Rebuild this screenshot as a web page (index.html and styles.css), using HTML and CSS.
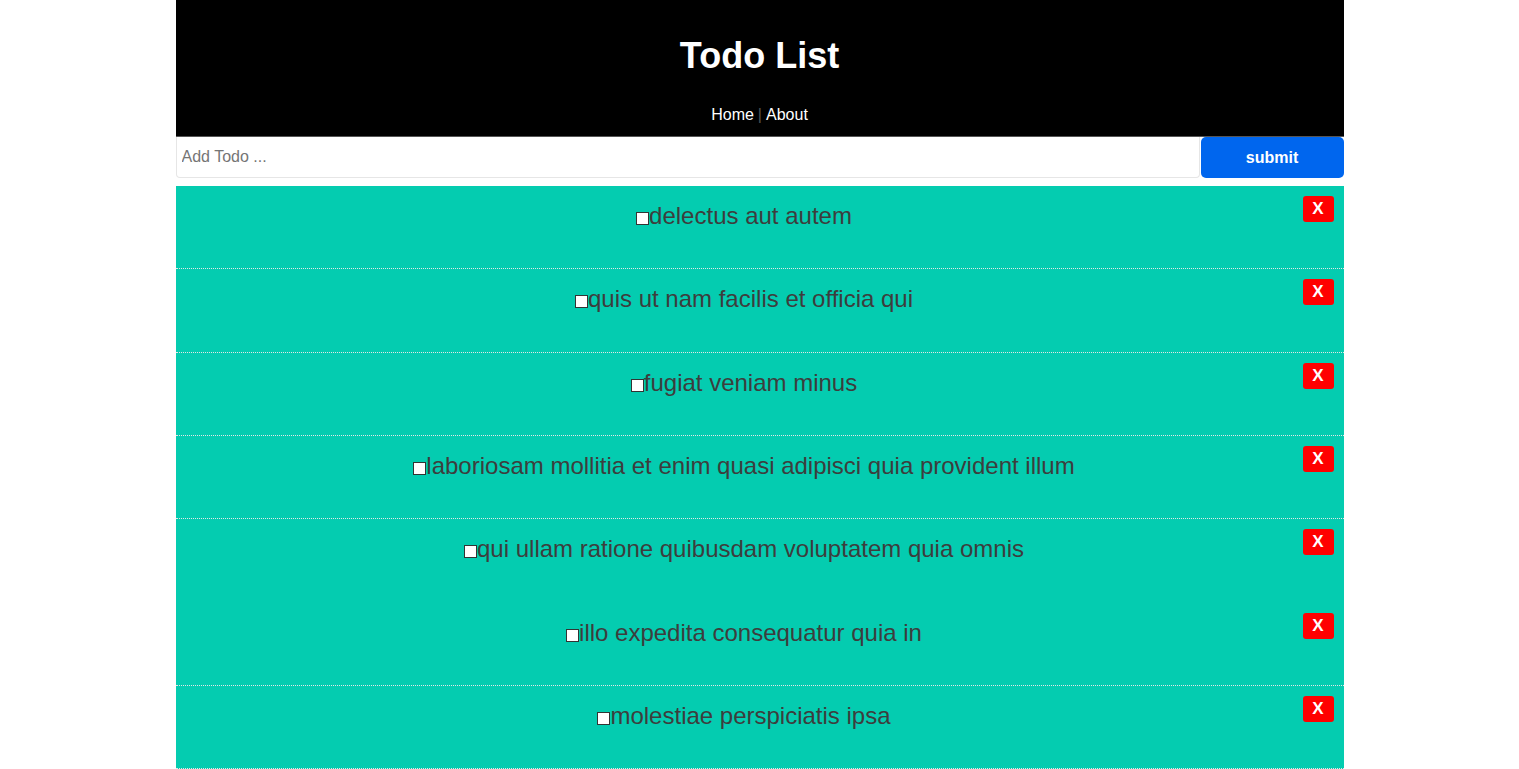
FILE: index.html
```html
<!DOCTYPE html>
<html>
<head>
<meta charset="utf-8">
<title>Todo List</title>
<link rel="stylesheet" href="styles.css">
</head>
<body>
<div class="app">
  <header class="header">
    <h1 class="title">Todo List</h1>
    <nav class="nav"><a class="nav-link" href="#">Home</a><span class="sep">|</span><a class="nav-link" href="#">About</a></nav>
  </header>
  <form class="add-form">
    <input class="add-input" type="text" placeholder="Add Todo ...">
    <button class="add-btn" type="button">submit</button>
  </form>
  <div class="list">
    <div class="item"><button class="del">X</button><input class="chk" type="checkbox">delectus aut autem</div>
    <div class="item"><button class="del">X</button><input class="chk" type="checkbox">quis ut nam facilis et officia qui</div>
    <div class="item"><button class="del">X</button><input class="chk" type="checkbox">fugiat veniam minus</div>
    <div class="item"><button class="del">X</button><input class="chk" type="checkbox">laboriosam mollitia et enim quasi adipisci quia provident illum</div>
    <div class="item no-line"><button class="del">X</button><input class="chk" type="checkbox">qui ullam ratione quibusdam voluptatem quia omnis</div>
    <div class="item"><button class="del">X</button><input class="chk" type="checkbox">illo expedita consequatur quia in</div>
    <div class="item"><button class="del">X</button><input class="chk" type="checkbox">molestiae perspiciatis ipsa</div>
  </div>
</div>
</body>
</html>
```

FILE: styles.css
```css
html, body {
  margin: 0;
  padding: 0;
  background: #fff;
  font-family: "Liberation Sans", Arial, sans-serif;
}

.app {
  width: 1168px;
  margin: 0 auto;
}

.header {
  background: #000;
  color: #fff;
  text-align: center;
  height: 137px;
  box-sizing: border-box;
  padding-top: 35px;
  border-bottom: 1px solid #555;
}

.title {
  margin: 0;
  font-size: 36px;
  line-height: 42px;
  font-weight: bold;
}

.nav {
  margin-top: 29px;
  font-size: 16px;
  line-height: 18px;
}

.nav-link {
  color: #fff;
  text-decoration: none;
}

.sep {
  color: #555;
  margin: 0 4px;
}

.add-form {
  display: flex;
  gap: 1px;
  height: 41px;
  margin-bottom: 8px;
}

.add-input {
  flex: 1;
  margin: 0;
  box-sizing: border-box;
  height: 41px;
  border: 1px solid #e6e6e6;
  border-top: none;
  border-radius: 0 0 4px 4px;
  padding: 0 5px;
  font-family: "Liberation Sans", Arial, sans-serif;
  font-size: 16px;
  color: #333;
  outline: none;
}

.add-input::placeholder {
  color: #757575;
}

.add-btn {
  width: 143px;
  height: 41px;
  margin: 0;
  border: none;
  border-radius: 5px;
  background: #0066ee;
  color: #fff;
  font-family: "Liberation Sans", Arial, sans-serif;
  font-size: 16px;
  font-weight: bold;
  cursor: pointer;
}

.list {
  background: #04ccb0;
}

.item {
  height: 83.34px;
  box-sizing: border-box;
  padding: 16px 10px 0;
  border-bottom: 1px dotted #e6e6e6;
  text-align: center;
  font-size: 24px;
  line-height: 28px;
  color: #3d3d3d;
}

.item.no-line {
  border-bottom-color: transparent;
}

.chk {
  appearance: none;
  -webkit-appearance: none;
  box-sizing: border-box;
  width: 13px;
  height: 13px;
  margin: 0;
  border: 1px solid #333;
  background: #fff;
  border-radius: 0;
  vertical-align: -1px;
}

.del {
  float: right;
  margin-top: -6px;
  width: 31px;
  height: 26px;
  border: none;
  border-radius: 3px;
  background: #ff0000;
  color: #fff;
  font-family: "Liberation Sans", Arial, sans-serif;
  font-size: 17px;
  font-weight: bold;
  padding: 0;
  cursor: pointer;
}
```
